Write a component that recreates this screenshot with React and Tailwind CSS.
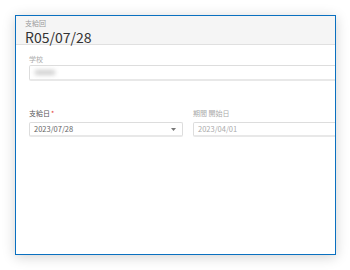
import React from 'react';

const font = { fontFamily: '"Noto Sans CJK JP", "Noto Sans", sans-serif' };

// small grey label above a field
const Label = ({ children, required, muted }) => (
  <div className={`h-[10px] flex items-center text-[7px] leading-none ${muted ? 'text-[#aaa]' : 'text-[#555]'}`}>
    {children}
    {required && <span className="text-[#e53935] ml-[1px]">*</span>}
  </div>
);

const App = () => {
  return (
    <div className="w-[350px] h-[270px] bg-white pt-[15px] pl-[15px]" style={font}>
      <div className="w-[321px] h-[240px] border-[1.5px] border-[#0a70c0] bg-white overflow-hidden shadow-[0_2px_12px_rgba(0,0,0,0.18)]">
        {/* header */}
        <div className="h-[29px] bg-[#f5f5f5] border-b border-[#e0e0e0] pl-[9px] pt-[3px]">
          <div className="text-[7px] leading-[9px] text-[#999]">支給回</div>
          <div className="text-[14px] leading-[14px] mt-[2px] text-[#333]">R05/07/28</div>
        </div>

        {/* body */}
        <div className="pl-[13px] pt-[9px]">
          <Label muted>学校</Label>
          <div className="mt-[1px] w-[320px] h-[16px] border border-[#ddd] border-b-2 border-b-[#e8e8e8] rounded-[2px] flex items-center pl-[5px]">
            <div className="w-[20px] h-[5px] bg-[#cfcfcf] blur-[2px]" />
          </div>

          <div className="flex gap-[10px] mt-[27px]">
            <div className="w-[154px] shrink-0">
              <Label required>支給日</Label>
              <div className="mt-[4px] h-[15px] border border-[#ddd] border-b-2 border-b-[#e8e8e8] rounded-[2px] flex items-center justify-between pl-[4px] pr-[6px]">
                <span className="text-[7.5px] text-[#666]">2023/07/28</span>
                <svg width="5" height="3" viewBox="0 0 5 3">
                  <path d="M0 0 L5 0 L2.5 3 Z" fill="#777" />
                </svg>
              </div>
            </div>
            <div className="w-[200px] shrink-0">
              <Label muted>期間 開始日</Label>
              <div className="mt-[4px] h-[15px] border border-[#ddd] border-b-2 border-b-[#e8e8e8] rounded-[2px] flex items-center pl-[4px]">
                <span className="text-[7.5px] text-[#aaa]">2023/04/01</span>
              </div>
            </div>
          </div>
        </div>
      </div>
    </div>
  );
};

export default App;
